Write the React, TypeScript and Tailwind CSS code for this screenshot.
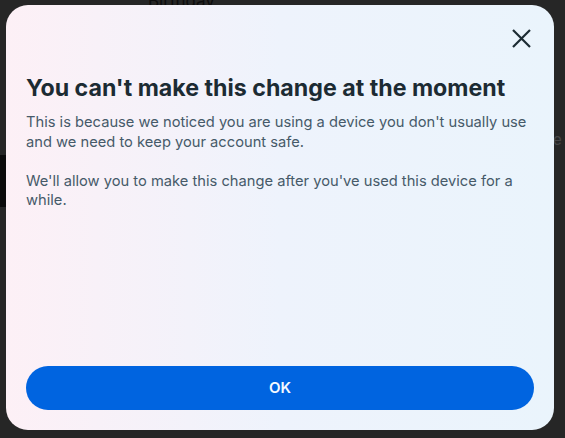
import React from "react";

export default function App() {
  return (
    <div className="relative w-[565px] h-[438px] overflow-hidden bg-[#262626]" style={{ fontFamily: "Inter, 'Noto Sans', sans-serif" }}>
      {/* dimmed page behind */}
      <div className="flex flex-col">
        <div className="h-[14px] pl-[148px] -mt-[9px] text-[17px] leading-[20px] text-[#0d0d0d]">Birthday</div>
        <div className="h-[150px]" />
        <div className="flex h-[52px]">
          <div className="w-[8px] bg-[#0b0b0b]" />
        </div>
      </div>
      <div className="absolute left-[553px] top-[131px] text-[15px] leading-[18px] text-[#474747]">e</div>

      {/* dialog */}
      <div className="absolute left-[6px] top-[5px] w-[548px] h-[425px] rounded-[22px] bg-gradient-to-r from-[#fdf0f6] via-[#eef3fc] to-[#eaf4fc] flex flex-col px-[20px] pb-[20px]">
        <div className="flex justify-end pt-[18px] h-[66px]">
          <button className="w-[30px] h-[30px] flex items-center justify-center -mr-[2px]">
            <svg width="21" height="21" viewBox="0 0 21 21" fill="none">
              <path d="M2 2 L19 19 M19 2 L2 19" stroke="#1c2b33" strokeWidth="2.2" strokeLinecap="butt" />
            </svg>
          </button>
        </div>
        <h1 className="mt-[3px] text-[23.2px] leading-[28px] font-bold text-[#1c2b33]">
          You can't make this change at the moment
        </h1>
        <div className="mt-[11px] text-[14.7px] leading-[19.5px] text-[#465a69]">
          <p>This is because we noticed you are using a device you don't usually use and we need to keep your account safe.</p>
          <p className="mt-[19.5px]">We'll allow you to make this change after you've used this device for a while.</p>
        </div>
        <div className="flex-1" />
        <button className="h-[44px] w-full rounded-full bg-[#0064e0] text-[#f5f9ff] text-[15px] font-semibold">
          OK
        </button>
      </div>
    </div>
  );
}
